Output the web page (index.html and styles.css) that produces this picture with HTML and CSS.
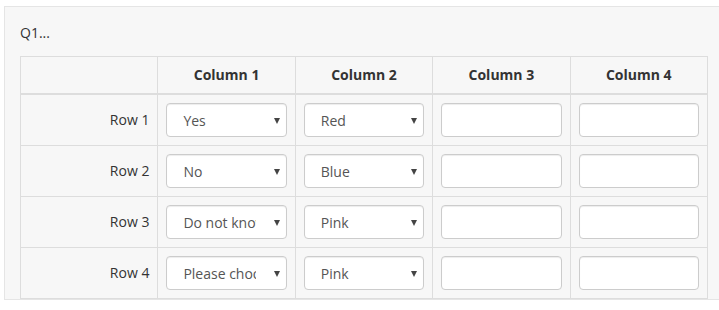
FILE: index.html
```html
<!DOCTYPE html>
<html lang="en">
<head>
    <meta charset="UTF-8">
    <meta name="viewport" content="width=device-width, initial-scale=1.0">
    <title>Q1 matrix</title>
    <link rel="stylesheet" href="styles.css">
</head>
<body>
    <div class="question-panel">
        <div class="question-title">Q1...</div>
        <table class="matrix">
            <thead>
                <tr>
                    <th></th>
                    <th>Column 1</th>
                    <th>Column 2</th>
                    <th>Column 3</th>
                    <th>Column 4</th>
                </tr>
            </thead>
            <tbody>
                <tr>
                    <td class="row-label">Row 1</td>
                    <td><span class="select-wrap"><select class="form-control"><option>Yes</option></select></span></td>
                    <td><span class="select-wrap"><select class="form-control"><option>Red</option></select></span></td>
                    <td><input type="text" class="form-control"></td>
                    <td><input type="text" class="form-control"></td>
                </tr>
                <tr>
                    <td class="row-label">Row 2</td>
                    <td><span class="select-wrap"><select class="form-control"><option>No</option></select></span></td>
                    <td><span class="select-wrap"><select class="form-control"><option>Blue</option></select></span></td>
                    <td><input type="text" class="form-control"></td>
                    <td><input type="text" class="form-control"></td>
                </tr>
                <tr>
                    <td class="row-label">Row 3</td>
                    <td><span class="select-wrap"><select class="form-control"><option>Do not know</option></select></span></td>
                    <td><span class="select-wrap"><select class="form-control"><option>Pink</option></select></span></td>
                    <td><input type="text" class="form-control"></td>
                    <td><input type="text" class="form-control"></td>
                </tr>
                <tr>
                    <td class="row-label">Row 4</td>
                    <td><span class="select-wrap"><select class="form-control"><option>Please choose...</option></select></span></td>
                    <td><span class="select-wrap"><select class="form-control"><option>Pink</option></select></span></td>
                    <td><input type="text" class="form-control"></td>
                    <td><input type="text" class="form-control"></td>
                </tr>
            </tbody>
        </table>
    </div>
</body>
</html>
```

FILE: styles.css
```css
body {
    font-family: "Open Sans", Arial, sans-serif;
    font-size: 14px;
    line-height: 20px;
    color: #333;
    background-color: #fff;
    margin: 0;
    overflow: hidden;
}
.question-panel {
    margin: 6px 0 0 4px;
    width: 718px;
    background-color: #f7f7f7;
    border: 1px solid #e5e5e5;
    padding: 16px 15px 0;
}
.question-title {
    margin-bottom: 13px;
}
.matrix {
    width: 688px;
    table-layout: fixed;
    border-collapse: collapse;
    border: 1px solid #ddd;
}
.matrix th,
.matrix td {
    border: 1px solid #ddd;
    padding: 8px;
    vertical-align: middle;
}
.matrix th {
    font-weight: bold;
    text-align: center;
    border-bottom: 2px solid #ddd;
}
.matrix .row-label {
    text-align: right;
}
.form-control {
    display: block;
    width: 100%;
    height: 34px;
    box-sizing: border-box;
    font-family: "Open Sans", Arial, sans-serif;
    font-size: 14px;
    color: #555;
    background-color: #fff;
    border: 1px solid #ccc;
    border-radius: 4px;
    box-shadow: inset 0 1px 1px rgba(0,0,0,0.075);
    padding: 6px 12px;
    margin: 0;
}
.select-wrap {
    display: block;
    position: relative;
}
select.form-control {
    appearance: none;
    -webkit-appearance: none;
    padding: 6px 30px 6px 16px;
}
.select-wrap::after {
    content: "";
    position: absolute;
    right: 7px;
    top: 15px;
    border-left: 3.5px solid transparent;
    border-right: 3.5px solid transparent;
    border-top: 6px solid #444;
    pointer-events: none;
}
```
